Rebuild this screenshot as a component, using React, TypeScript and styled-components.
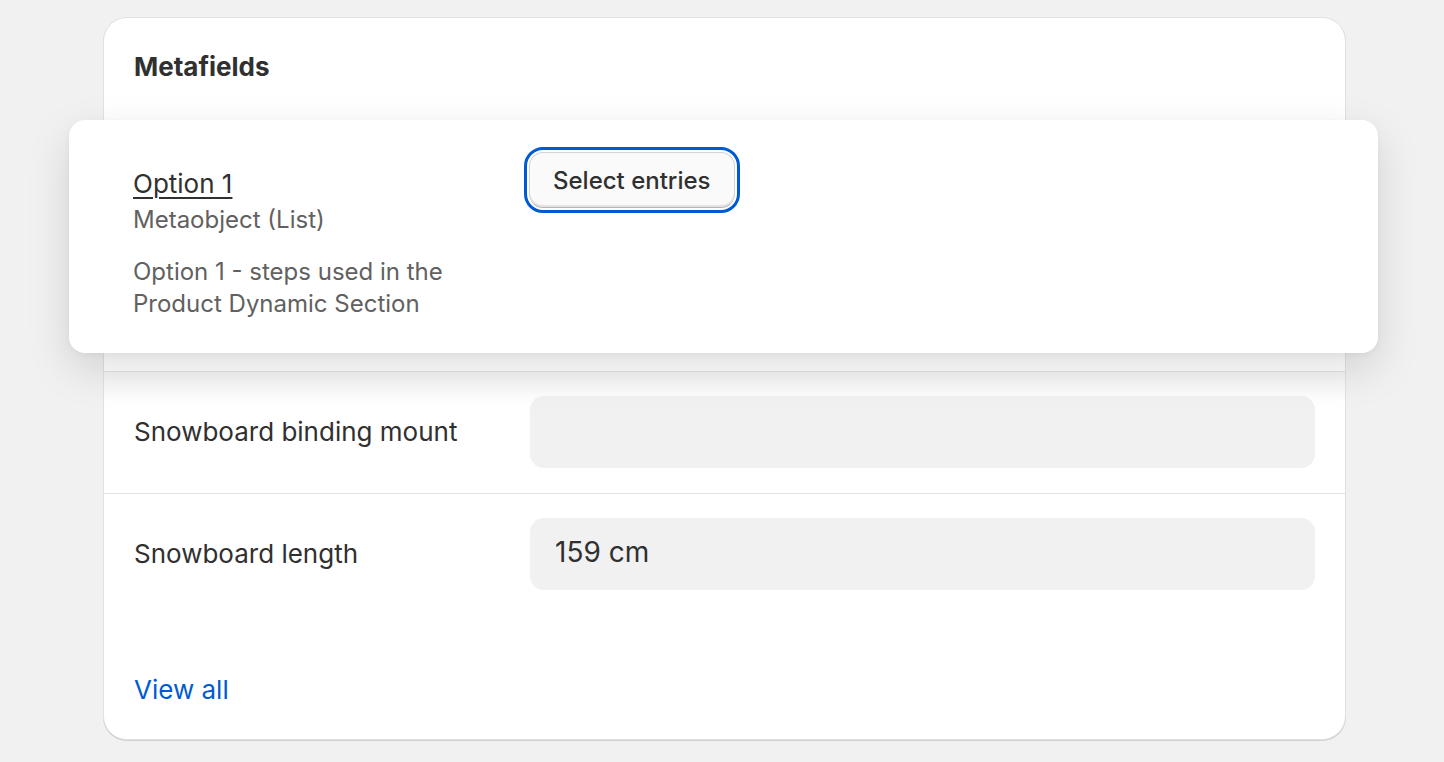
import React from 'react';
import styled, { createGlobalStyle } from 'styled-components';

const GlobalStyle = createGlobalStyle`
  html, body {
    margin: 0;
    padding: 0;
    background: #f1f1f1;
    font-family: Inter, "Noto Sans", sans-serif;
    color: #303030;
    -webkit-font-smoothing: antialiased;
  }
`

const Page = styled.div`
  padding: 17px 0 20px 103px;
`

const Card = styled.section`
  width: 1243px;
  box-sizing: border-box;
  background: #fff;
  border: 1px solid #e1e1e1;
  border-radius: 24px;
  box-shadow: 0 1px 0 #d0d0d0;
`

const CardHeader = styled.div`
  padding: 29px 30px 33px;
`

const Title = styled.h2`
  margin: 0;
  font-size: 26px;
  line-height: 40px;
  font-weight: 650;
`

const FieldGrid = styled.div`
  display: grid;
  grid-template-columns: 366px 1fr;
  column-gap: 30px;
`

const DraggedRow = styled(FieldGrid)`
  position: relative;
  z-index: 2;
  margin: 0 -33px 18px -35px;
  padding: 32px 63px 33px 64px;
  align-items: start;
  background: #fff;
  border-radius: 16px;
  box-shadow: 0 16px 44px rgba(0, 0, 0, 0.13), 0 2px 6px rgba(0, 0, 0, 0.04);
`

const LabelColumn = styled.div`
  display: flex;
  flex-direction: column;
  padding-top: 12px;
`

const OptionLink = styled.a`
  align-self: flex-start;
  font-size: 26px;
  line-height: 40px;
  color: #303030;
  text-decoration: underline;
  text-underline-offset: 4px;
  text-decoration-thickness: 1.5px;
  cursor: pointer;
`

const TypeText = styled.span`
  font-size: 24px;
  line-height: 32px;
  color: #616161;
`

const Description = styled.p`
  margin: 20px 0 0;
  font-size: 24px;
  line-height: 32px;
  color: #616161;
`

const SelectButton = styled.button`
  justify-self: start;
  height: 56px;
  padding: 0 23px;
  font-family: inherit;
  font-size: 24px;
  font-weight: 550;
  color: #303030;
  background: #fafafa;
  border: 1px solid #d4d4d4;
  border-bottom-color: #b5b5b5;
  border-radius: 14px;
  box-shadow: inset 0 -2px 0 #e3e3e3;
  outline: 3px solid #005bd3;
  outline-offset: 2px;
  cursor: pointer;
`

const FieldRow = styled(FieldGrid)`
  align-items: center;
  padding: 24px 30px 25px;
`

const FieldLabel = styled.span`
  font-size: 26px;
  line-height: 40px;
`

const ValueBox = styled.div`
  height: 72px;
  box-sizing: border-box;
  display: flex;
  align-items: center;
  padding: 0 25px 4px;
  background: #f1f1f1;
  border-radius: 14px;
  font-size: 28px;
  color: #303030;
`

const Rows = styled.div`
  & > div + div {
    border-top: 1px solid #e3e3e3;
  }
  & > div:first-child {
    border-top: 1px solid #e3e3e3;
    background: linear-gradient(#f4f4f4, #fff 30px);
  }
`

const Footer = styled.div`
  padding: 55px 30px 29px;
`

const ViewAll = styled.a`
  font-size: 26px;
  line-height: 40px;
  color: #005bd3;
  cursor: pointer;
`

const fields = [
  { label: 'Snowboard binding mount', value: '' },
  { label: 'Snowboard length', value: '159 cm' },
];

const App = () => {
  return (
    <>
      <GlobalStyle />
      <Page>
        <Card>
          <CardHeader>
            <Title>Metafields</Title>
          </CardHeader>
          <DraggedRow>
            <LabelColumn>
              <OptionLink>Option 1</OptionLink>
              <TypeText>Metaobject (List)</TypeText>
              <Description>
                Option 1 - steps used in the
                <br />
                Product Dynamic Section
              </Description>
            </LabelColumn>
            <SelectButton>Select entries</SelectButton>
          </DraggedRow>
          <Rows>
            {fields.map(f => (
              <FieldRow key={f.label}>
                <FieldLabel>{f.label}</FieldLabel>
                <ValueBox>{f.value}</ValueBox>
              </FieldRow>
            ))}
          </Rows>
          <Footer>
            <ViewAll>View all</ViewAll>
          </Footer>
        </Card>
      </Page>
    </>
  )
}

export default App;
